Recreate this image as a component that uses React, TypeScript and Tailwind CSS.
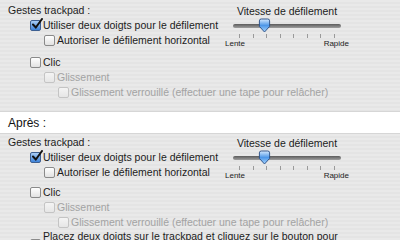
import React from "react";

const font = { fontFamily: '"Liberation Sans", Arial, sans-serif' };

const Checkbox = ({ checked = false, disabled = false }: { checked?: boolean; disabled?: boolean }) => (
  <span
    className={`relative inline-block w-[11px] h-[11px] shrink-0 rounded-[2px] border ${
      checked
        ? "border-[#3d5f91] bg-gradient-to-b from-[#a9cdf5] to-[#3b82d9]"
        : disabled
        ? "border-[#c4c4c4] bg-gradient-to-b from-[#f4f4f4] to-[#e6e6e6]"
        : "border-[#8a8a8a] bg-gradient-to-b from-[#ffffff] to-[#e2e2e2]"
    }`}
  >
    {checked && (
      <svg viewBox="0 0 12 12" className="absolute left-[0px] top-[-3px] w-[12px] h-[12px]">
        <path d="M2 6.5 L4.8 9.5 L11 1" fill="none" stroke="#111" strokeWidth="2" strokeLinecap="round" />
      </svg>
    )}
  </span>
);

const Row = ({
  label,
  checked,
  disabled,
  indent,
}: {
  label: string;
  checked?: boolean;
  disabled?: boolean;
  indent: string;
}) => (
  <div className={`flex items-center gap-[2px] h-[15px] ${indent}`}>
    <Checkbox checked={checked} disabled={disabled} />
    <span className={`whitespace-nowrap ${disabled ? "text-[#a3a3a3]" : "text-[#1c1c1c]"}`}>{label}</span>
  </div>
);

const ticks = [0, 1, 2, 3, 4, 5, 6, 7];

const Slider = () => (
  <div className="flex flex-col items-center w-[124px] h-[45px]">
    <div className="text-[#1c1c1c] h-[12px] leading-[12px] mt-[2px]">Vitesse de défilement</div>
    <div className="relative w-[108px] h-[16px] mt-[1px]">
      <div className="absolute left-0 right-0 top-[6px] h-[4px] rounded-full bg-gradient-to-b from-[#5c5c5c] to-[#a0a0a0]" />
      <svg viewBox="0 0 14 16" className="absolute left-[25px] top-[0px] w-[13px] h-[15px]">
        <defs>
          <linearGradient id="kn" x1="0" y1="0" x2="0" y2="1">
            <stop offset="0" stopColor="#d6eaff" />
            <stop offset="0.5" stopColor="#4d97e8" />
            <stop offset="1" stopColor="#a9d6ff" />
          </linearGradient>
        </defs>
        <path d="M1.5 3 Q1.5 1 3.5 1 H10.5 Q12.5 1 12.5 3 V9 L7 15 L1.5 9 Z" fill="url(#kn)" stroke="#2b4f85" strokeWidth="1" />
      </svg>
    </div>
    <div className="flex justify-between w-[96px] h-[4px]">
      {ticks.map((t) => (
        <span key={t} className="w-px h-[4px] bg-[#9a9a9a]" />
      ))}
    </div>
    <div className="flex justify-between w-[124px] h-[9px] text-[8px] leading-[9px] text-[#222] mt-[1px]">
      <span>Lente</span>
      <span>Rapide</span>
    </div>
  </div>
);

const Panel = ({ last = false }: { last?: boolean }) => (
  <div
    className={`bg-[repeating-linear-gradient(180deg,#e9e9e9_0px,#e9e9e9_2px,#e4e4e4_2px,#e4e4e4_4px)] border-[#d6d6d6] ${
      last ? "pt-[1px] border-t" : "pt-[3px] pb-[11px] border-b"
    }`}
  >
    <div className="flex h-[45px]">
      <div className="flex flex-col w-[225px]">
        <div className="pl-[8px] h-[15px] leading-[15px] text-[#1c1c1c]">Gestes trackpad :</div>
        <Row indent="pl-[30px]" label="Utiliser deux doigts pour le défilement" checked />
        <Row indent="pl-[44px]" label="Autoriser le défilement horizontal" />
      </div>
      <Slider />
    </div>
    <div className={`flex flex-col ${last ? "mt-[5px]" : "mt-[7px]"}`}>
      <Row indent="pl-[30px]" label="Clic" />
      <Row indent="pl-[44px]" label="Glissement" disabled />
      <Row indent="pl-[58px]" label="Glissement verrouillé (effectuer une tape pour relâcher)" disabled />
      {last && (
        <div className="flex items-start gap-[2px] pl-[30px]">
          <span className="mt-[9px]">
            <Checkbox />
          </span>
          <span className="text-[#1c1c1c] leading-[12px]">
            Placez deux doigts sur le trackpad et cliquez sur le bouton pour
            <br />
            afficher le menu contextuel
          </span>
        </div>
      )}
    </div>
  </div>
);

export default function App() {
  return (
    <div className="w-[400px] h-[240px] overflow-hidden bg-white text-[10.5px]" style={font}>
      <Panel />
      <div className="h-[21px] pl-[8px] leading-[23px] text-[12px] text-[#111]">Après :</div>
      <Panel last />
    </div>
  );
}
